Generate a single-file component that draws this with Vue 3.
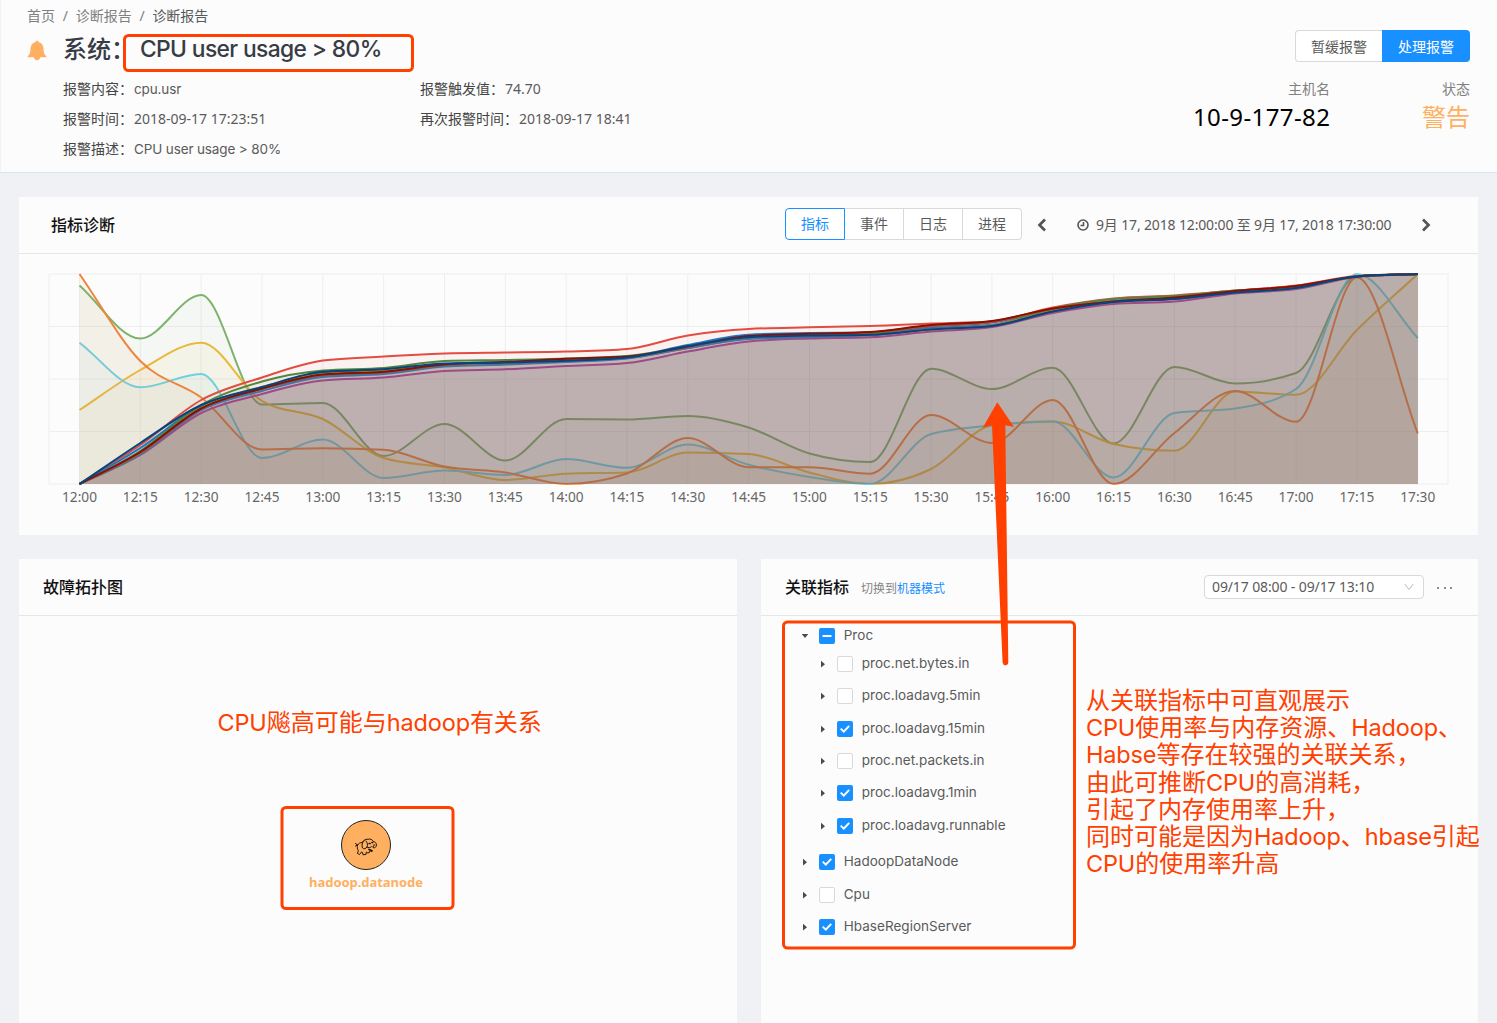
<script setup>
const details = [
  [['报警内容：', 'cpu.usr', 'latin'], ['报警触发值：', '74.70', 'num']],
  [['报警时间：', '2018-09-17 17:23:51', 'num'], ['再次报警时间：', '2018-09-17 18:41', 'num']],
  [['报警描述：', 'CPU user usage > 80%', 'latin']],
]
const tabs = ['指标', '事件', '日志', '进程']

const step = 60.83
const left = 79.5 - 19
const top = 274 - 254
const bottom = 484 - 254
const labels = Array.from({ length: 23 }, (_, i) => {
  const m = 720 + i * 15
  return `${Math.floor(m / 60)}:${String(m % 60).padStart(2, '0')}`
})
const series = [
  ['#7EB26D', [285.5, 338.5, 295, 404.5, 403, 456, 424, 460.5, 419, 419.5, 416, 427.5, 453.5, 462, 368.8, 389, 367.8, 443.5, 367, 383.5, 373, 276, 274]],
  ['#EAB839', [410, 370, 342.7, 401, 419, 458, 467.5, 480, 473.7, 472.5, 452.5, 454, 472.5, 484, 469, 425.5, 421.5, 444, 450.8, 391.5, 394.8, 330, 274]],
  ['#6ED0E0', [342.7, 387.3, 373.9, 458, 439.5, 478, 470.5, 475, 459, 467.8, 444.5, 464.8, 477, 484, 434, 425.5, 421.5, 477.5, 413, 408.5, 389, 274, 338]],
  ['#EF843C', [274, 361, 397.5, 449.5, 448.2, 449.8, 466.5, 472.5, 484, 473.5, 438, 467.3, 467.3, 473.7, 415, 443, 400, 484, 433, 391, 421.8, 277.5, 433.5]],
  ['#E24D42', [484, 445, 400, 377.5, 360.5, 356.5, 353.5, 352.5, 351.5, 349, 335.5, 329, 327.3, 326, 323.5, 321.5, 307.5, 298.5, 295.5, 290.5, 285.5, 276, 274]],
  ['#1F78C1', [484, 448, 406, 388, 373, 370, 364, 362, 360, 357, 345, 334.7, 333, 332.5, 328, 325, 310, 301, 298, 292, 287.5, 276.5, 274]],
  ['#BA43A9', [484, 455, 413, 394, 380.5, 377.5, 371, 369.3, 366, 363, 351.5, 341.5, 338.5, 337.2, 331.5, 327, 313, 304, 301.5, 293.5, 289, 277, 274]],
  ['#705DA0', [484, 454, 409, 389, 376, 373, 366, 364, 361, 358, 348, 338, 336, 334, 326.5, 322.5, 309.5, 301, 298, 292, 287, 276.5, 274]],
  ['#508642', [484, 451, 405, 381.5, 370.5, 368, 361, 360, 358.5, 356, 346.5, 337.5, 335.5, 334, 329, 325, 308.5, 299, 296, 290.5, 287, 276.5, 274]],
  ['#CCA300', [484, 453, 408, 387, 374, 371, 365, 363, 361, 358, 347.5, 338, 336, 335, 329.5, 325.5, 311, 302, 298.5, 292, 288, 276.5, 274]],
  ['#447EBC', [484, 454.5, 410, 391, 377, 374, 366.5, 364.5, 362, 358.5, 348, 339, 337, 335.3, 329, 325.5, 311.5, 302, 299, 292.5, 288, 276.5, 274]],
  ['#C15C17', [484, 453, 408.500, 388.5, 374.7, 372, 364.700, 362.300, 359.500, 357, 346.700, 336.500, 334.300, 332.300, 325.500, 321.400, 308.700, 301.5, 297.700, 291.200, 286.300, 276.5, 274]],
  ['#890F02', [484, 452, 408.5, 388.5, 374.5, 371.7, 364.5, 362, 358.8, 356.5, 346.5, 336, 333.8, 332, 325, 321, 308.5, 301.5, 297.5, 291, 286, 276.5, 274]],
  ['#0A437C', [484, 443, 405, 387, 371.8, 369.3, 363.5, 362.5, 360.7, 357.5, 346, 337.2, 335.5, 334.8, 329.5, 326, 311.5, 302, 299, 292.5, 288, 276.5, 274]],
]

function smooth(values) {
  const y = values.map((v) => v - 254)
  const n = y.length
  const d = []
  for (let i = 0; i < n - 1; i++) d.push(y[i + 1] - y[i])
  const m = y.map((_, i) => {
    if (i === 0) return d[0]
    if (i === n - 1) return d[n - 2]
    const a = d[i - 1]
    const b = d[i]
    if (a * b <= 0) return 0
    return Math.sign(a) * 2 * Math.min(Math.abs(a), Math.abs(b), Math.abs(a + b) / 4)
  })
  let path = `M${left} ${y[0]}`
  for (let i = 0; i < n - 1; i++) {
    const x = left + i * step
    path += `C${(x + step / 3).toFixed(1)} ${(y[i] + m[i] / 3).toFixed(1)} ${(x + (2 * step) / 3).toFixed(1)} ${(y[i + 1] - m[i + 1] / 3).toFixed(1)} ${(x + step).toFixed(1)} ${y[i + 1]}`
  }
  return path
}
const curves = series.map(([color, values]) => {
  const line = smooth(values)
  return { color, line, area: `${line}V${bottom}H${left}Z` }
})

const tree = [
  { name: 'Proc', state: 'part', open: true },
  { name: 'proc.net.bytes.in', state: 'off', child: true },
  { name: 'proc.loadavg.5min', state: 'off', child: true },
  { name: 'proc.loadavg.15min', state: 'on', child: true },
  { name: 'proc.net.packets.in', state: 'off', child: true },
  { name: 'proc.loadavg.1min', state: 'on', child: true },
  { name: 'proc.loadavg.runnable', state: 'on', child: true, last: true },
  { name: 'HadoopDataNode', state: 'on' },
  { name: 'Cpu', state: 'off' },
  { name: 'HbaseRegionServer', state: 'on' },
]
const notes = [
  [['从关联指标中可直观展示']],
  [['CPU', 1], ['使用率与内存资源、'], ['Hadoop', 1], ['、']],
  [['Habse', 1], ['等存在较强的关联关系，']],
  [['由此可推断'], ['CPU', 1], ['的高消耗，']],
  [['引起了内存使用率上升，']],
  [['同时可能是因为'], ['Hadoop', 1], ['、'], ['hbase', 1], ['引起']],
  [['CPU', 1], ['的使用率升高']],
]
</script>

<template>
  <div class="page">
    <header class="head">
      <nav class="crumbs">
        <span>首页</span><i>/</i><span>诊断报告</span><i>/</i><span class="current">诊断报告</span>
      </nav>
      <div class="head-body">
        <svg class="bell" width="20" height="22" viewBox="0 0 20 22">
          <path fill="#ffaf60" d="M10 .8c-1 0-1.6.6-1.7 1.4C5.200 2.900 3.500 5.500 3.500 8.500c0 4-.8 6.200-2.600 7.500-.5.400-.3 1.300.400 1.300H6.800c.4 1.800 1.600 3 3.200 3s2.800-1.200 3.200-3h5.500c.7 0 .9-.9.400-1.300-1.800-1.300-2.600-3.500-2.600-7.500 0-3-1.700-5.600-4.800-6.300C11.600 1.400 11 .8 10 .8z" />
        </svg>
        <div class="info">
          <h1><span>系统：</span><b>CPU user usage &gt; 80%</b></h1>
          <div v-for="(row, i) in details" :key="i" class="row">
            <div v-for="item in row" :key="item[0]" class="cell">
              <span class="label">{{ item[0] }}</span><span :class="item[2]">{{ item[1] }}</span>
            </div>
          </div>
        </div>
        <div class="side">
          <div class="actions"><button>暂缓报警</button><button class="primary">处理报警</button></div>
          <div class="stats">
            <div><p>主机名</p><strong>10-9-177-82</strong></div>
            <div class="status"><p>状态</p><strong>警告</strong></div>
          </div>
        </div>
      </div>
    </header>

    <main>
      <section class="card chart-card">
        <div class="card-head chart-head">
          <h2>指标诊断</h2>
          <div class="tabs"><span v-for="(t, i) in tabs" :key="t" :class="{ active: i === 0 }">{{ t }}</span></div>
          <svg class="prev" width="10" height="14" viewBox="0 0 10 14"><path d="M8 1.500L2.500 7 8 12.500" /></svg>
          <div class="range">
            <svg width="12" height="12" viewBox="0 0 12 12"><circle cx="6" cy="6" r="5" /><path d="M6.500 3v3.500H3.500" /></svg>
            <span>9月 17, 2018 12:00:00 至 9月 17, 2018 17:30:00</span>
          </div>
          <svg class="next" width="10" height="14" viewBox="0 0 10 14"><path d="M2 1.500L7.500 7 2 12.500" /></svg>
        </div>
        <svg class="chart" width="1459" height="270" viewBox="0 0 1459 270">
          <g class="grid">
            <path v-for="k in 5" :key="'h' + k" :d="`M30 ${top + (k - 1) * 52.5}H1429.500`" />
            <path v-for="(l, i) in labels" :key="l" :d="`M${left + i * step} ${top}V${bottom}`" />
            <path :d="`M30 ${top}V${bottom}M1429 ${top}V${bottom}`" />
          </g>
          <g v-for="c in curves" :key="c.color">
            <path :d="c.area" :fill="c.color" fill-opacity=".06" />
            <path :d="c.line" :stroke="c.color" class="line" />
          </g>
          <text v-for="(l, i) in labels" :key="'t' + l" :x="left + i * step" y="248">{{ l }}</text>
        </svg>
      </section>

      <div class="columns">
        <section class="card topology">
          <div class="card-head"><h2>故障拓扑图</h2></div>
          <div class="canvas">
            <p class="remark"><span class="en">CPU</span>飚高可能与<span class="en">hadoop</span>有关系</p>
            <div class="node">
              <svg width="50" height="50" viewBox="0 0 50 50">
                <circle cx="25" cy="25" r="24.500" fill="#ffaf60" stroke="#222" />
                <g fill="none" stroke="#1c1712" stroke-width="1" stroke-linejoin="round" stroke-linecap="round">
                  <path d="M14.500 23.500l2 1.500M14.500 26l2-1c1-1.500 2.500-2.500 4.500-2.500M16.500 25c-.5 2-.3 4 .8 5.500l-.8 3 2 1 2-2.500 1 .3.500 2.500 3-.4.300-2.400 1.500 1 1.700-.5.500-2 1.500 1" />
                  <path d="M21 22.500c2.500-2.500 3-3.500 6-3.200 2-.8 4.500.2 5.200 2.200 1.800.2 3.300 1.500 3.200 3.500 0 2-1.500 3.200-3.200 2.700l-.2-1.800c1.200.3 1.700-.5 1.200-1.400" />
                  <path d="M23 20.500c-2 2-2.500 5-1.500 7.500 1.500 1.500 3.500.5 4.500-1 1-2 .5-4-1-6M26 27c1.500 1 3 1 4.500-.3M20 24" />
                  <path d="M28.200 23.500h.8M31 22.500h.6M28 29.500l3 1.300" stroke-width="1.700" />
                </g>
              </svg>
              <span>hadoop.datanode</span>
            </div>
          </div>
        </section>

        <section class="card related">
          <div class="card-head">
            <h2>关联指标</h2>
            <p class="switch">切换到<a>机器模式</a></p>
            <div class="select">
              <span>09/17 08:00 - 09/17 13:10</span>
              <svg width="10" height="8" viewBox="0 0 10 8"><path d="M.8 1L5 6.500 9.200 1" fill="none" stroke="#bbb" /></svg>
            </div>
            <div class="more"><i /><i /><i /></div>
          </div>
          <div class="related-body">
            <ul class="tree">
              <li v-for="n in tree" :key="n.name" :class="{ child: n.child, root: n.open, last: n.last }">
                <svg class="caret" width="8" height="8" viewBox="0 0 8 8">
                  <path :d="n.open ? 'M.7 2H7.300L4 6z' : 'M2 .8L6 4.200 2 7.600z'" fill="#4a4a4a" />
                </svg>
                <span class="box" :class="n.state">
                  <svg v-if="n.state !== 'off'" width="16" height="16" viewBox="0 0 16 16">
                    <path :d="n.state === 'on' ? 'M3.700 7.600L6.800 10.600 12.200 4.900' : 'M3.500 8H12.500'" fill="none" stroke="#fff" stroke-width="2" />
                  </svg>
                </span>
                <span class="name">{{ n.name }}</span>
              </li>
            </ul>
            <div class="notes">
              <p v-for="(line, i) in notes" :key="i"><span v-for="(part, j) in line" :key="j" :class="{ en: part[1] }">{{ part[0] }}</span></p>
            </div>
          </div>
        </section>
      </div>
    </main>

    <svg class="marks" width="1497" height="1023" viewBox="0 0 1497 1023">
      <g fill="none" stroke="#ff4000" stroke-width="3">
        <rect x="124.500" y="35.500" width="288" height="35" rx="4" />
        <rect x="282" y="807.500" width="171" height="101" rx="4" />
        <rect x="783.500" y="622" width="291" height="326" rx="4" />
      </g>
      <path fill="#ff4000" d="M997.300 402.300L1014 427l-8.700-1.700L1008.300 662.500q-.3 2.700-2.800 2.700t-2.900-2.700L992 425.300l-9.300 2.400z" />
    </svg>
  </div>
</template>

<style>
body { margin: 0; overflow: hidden; }
</style>
<style scoped>
* { box-sizing: border-box; }
.page {
  position: relative; width: 1497px; height: 1023px; overflow: hidden; background: #f0f1f5; color: #5a5a5a;
  font: 14px/20px "Noto Sans", "Noto Sans CJK SC", sans-serif;
}
h1, h2, p, ul { margin: 0; padding: 0; }
svg { display: block; flex: none; }
.head { height: 173px; background: #fcfcfc; border-bottom: 1px solid #dbe2ec; box-shadow: inset 1px 0 #f2f3f6; padding: 6px 27px 0; }
.crumbs { display: flex; height: 20px; color: #808080; }
.crumbs i { width: 5px; margin: 0 8px 0 7.700px; font-style: normal; text-align: center; }
.crumbs .current { color: #595959; }
.head-body { display: flex; }
.bell { margin-top: 13.500px; }
.info { margin-left: 16px; flex: 1; }
.info h1 { display: flex; height: 48px; line-height: 44px; font-size: 24px; font-weight: 500; color: #373b44; }
.info h1 span { width: 77px; font-family: "Noto Sans CJK SC", sans-serif; }
.info h1 b { font: 500 22.800px/46px Inter, sans-serif; letter-spacing: -.62px; }
.row { display: flex; height: 30px; line-height: 30px; }
.cell { display: flex; width: 357px; white-space: nowrap; }
.label { color: #454545; margin-right: 1px; font-family: "Noto Sans CJK SC", sans-serif; line-height: 29px; }
.latin { font: 13.500px/30px Inter, sans-serif; letter-spacing: -.13px; }
.side { width: 300px; display: flex; flex-direction: column; align-items: flex-end; }
.actions { display: flex; margin-top: 4px; }
.actions button { height: 32px; width: 87px; padding: 0; border: 1px solid #d9d9d9; border-right: 0; border-radius: 4px 0 0 4px; background: #fff; color: #5a5a5a; font: 14px/28px "Noto Sans CJK SC", sans-serif; }
.actions .primary { width: 88px; border: 0; background: #1890ff; color: #fff; border-radius: 0 4px 4px 0; }
.stats { display: flex; margin-top: 17px; text-align: right; }
.stats p { color: #808080; line-height: 20px; }
.stats strong { display: block; font-weight: 400; font-size: 24px; line-height: 36px; color: #000; letter-spacing: .4px; margin-right: -.4px; }
.stats .status { width: 140px; }
.stats .status strong { color: #ffaf60; letter-spacing: 0; margin: 0; }
main { padding: 24px 19px 0; }
.card { background: #fcfcfc; }
.card h2 { color: #111; font: 500 16px/24px "Noto Sans CJK SC", sans-serif; margin-top: -2px; }
.card-head { display: flex; align-items: center; height: 57px; border-bottom: 1px solid #e6e6e6; padding: 0 24px 0 24px; }
.chart-card { height: 338px; }
.chart-head { padding: 0 47px 0 32px; }
.tabs { display: flex; margin-left: auto; margin-top: -3px; }
.tabs span { height: 32px; width: 59px; text-align: center; line-height: 30px; background: #fff; border: 1px solid #d9d9d9; border-left: 0; }
.tabs .active { width: 60px; color: #1890ff; border: 1px solid #1890ff; border-radius: 4px 0 0 4px; }
.tabs span:last-child { border-radius: 0 4px 4px 0; }
.prev, .next { fill: none; stroke: #555; stroke-width: 2.700; }
.prev { margin-left: 15px; }
.range { display: flex; align-items: center; gap: 7px; margin: 0 29px 0 30px; width: 315px; white-space: nowrap; letter-spacing: -.15px; }
.range svg { fill: none; stroke: #555; stroke-width: 1.600; }
.grid path { stroke: #eee; fill: none; }
.line { fill: none; stroke-width: 2; }
.chart text { fill: #666; text-anchor: middle; font-size: 13.700px; }
.columns { display: flex; gap: 24px; margin-top: 24px; }
.topology { width: 718px; height: 464px; }
.related { width: 717px; height: 464px; }
.canvas { display: flex; flex-direction: column; }
.remark { margin: 88px 0 0 198.500px; height: 36px; font: 24px/34px "Noto Sans CJK SC", sans-serif; color: #ff4000; }
.en { font-family: Inter, sans-serif; font-size: 23.500px; line-height: 1; letter-spacing: -.15px; }
.node { display: flex; flex-direction: column; align-items: center; width: 174px; margin: 80px 0 0 260px; color: #ffaf60; font: bold 13px/18px "Noto Sans", sans-serif; }
.node span { margin-top: 3px; letter-spacing: -.05px; }
.switch { margin-left: 12px; margin-top: 2px; font: 12px/20px "Noto Sans CJK SC", sans-serif; color: #858585; }
.switch a { color: #1890ff; }
.select { display: flex; align-items: center; justify-content: space-between; width: 220px; height: 24px; margin-left: auto; padding: 0 9px 0 7px; border: 1px solid #d9d9d9; border-radius: 4px; background: #fff; letter-spacing: -.12px; }
.more { display: flex; gap: 4px; margin-left: 13px; width: 17px; margin-top: 1px; }
.more i { width: 2px; height: 2px; background: #666; border-radius: 1px; margin-right: .5px; }
.related-body { display: flex; }
.tree { width: 325px; flex: none; list-style: none; padding: 3px 0 0 40px; }
.tree li { display: flex; align-items: center; height: 32.400px; font: 13.500px/20px Inter, sans-serif; letter-spacing: .04px; }
.tree .root { margin-bottom: -4.700px; }
.tree .child { padding-left: 18px; }
.tree .last { margin-bottom: 4px; }
.caret { margin-top: 2px; }
.box { width: 16px; height: 16px; margin: 2px 8.700px 0 10px; border: 1px solid #d9d9d9; border-radius: 2px; background: #fff; }
.box.on, .box.part { border: 0; background: #1890ff; }
.notes { padding-top: 69px; color: #ff4000; font: 24px/27.200px "Noto Sans CJK SC", sans-serif; white-space: nowrap; }
.notes p { height: 27.200px; }
.marks { position: absolute; left: 0; top: 0; pointer-events: none; }
</style>
